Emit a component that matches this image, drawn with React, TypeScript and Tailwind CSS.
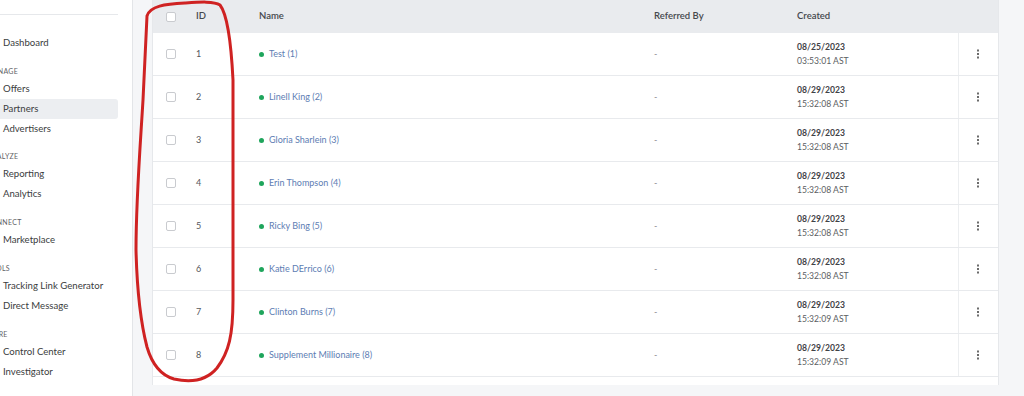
import React from 'react';

type Row = { id: number; name: string; date: string; time: string };

const rows: Row[] = [
  { id: 1, name: 'Test (1)', date: '08/25/2023', time: '03:53:01 AST' },
  { id: 2, name: 'Linell King (2)', date: '08/29/2023', time: '15:32:08 AST' },
  { id: 3, name: 'Gloria Sharlein (3)', date: '08/29/2023', time: '15:32:08 AST' },
  { id: 4, name: 'Erin Thompson (4)', date: '08/29/2023', time: '15:32:08 AST' },
  { id: 5, name: 'Ricky Bing (5)', date: '08/29/2023', time: '15:32:08 AST' },
  { id: 6, name: 'Katie DErrico (6)', date: '08/29/2023', time: '15:32:08 AST' },
  { id: 7, name: 'Clinton Burns (7)', date: '08/29/2023', time: '15:32:09 AST' },
  { id: 8, name: 'Supplement Millionaire (8)', date: '08/29/2023', time: '15:32:09 AST' },
];

const sections = [
  { label: 'Manage', items: ['Offers', 'Partners', 'Advertisers'] },
  { label: 'Analyze', items: ['Reporting', 'Analytics'] },
  { label: 'Connect', items: ['Marketplace'] },
  { label: 'Tools', items: ['Tracking Link Generator', 'Direct Message'] },
  { label: 'More', items: ['Control Center', 'Investigator'] },
];

const cols = 'grid grid-cols-[43px_63px_395px_143px_161px_42px]';

const Checkbox = () => (
  <div className="w-[10px] h-[10px] rounded-[2px] border border-[#c9cbcf] bg-white" />
);

const Dots = () => (
  <svg width="4" height="10" viewBox="0 0 4 10" className="text-[#6b6b6b]">
    <rect x="1" y="0.5" width="2" height="2" fill="currentColor" />
    <rect x="1" y="4" width="2" height="2" fill="currentColor" />
    <rect x="1" y="7.5" width="2" height="2" fill="currentColor" />
  </svg>
);

const NavItem = ({ text, active }: { text: string; active?: boolean }) => (
  <div
    className={`h-[20px] flex items-center pl-[3px] text-[9.6px] text-[#3b3d40] rounded-r-[3px] ${
      active ? 'bg-[#eceef1]' : ''
    }`}
  >
    {text}
  </div>
);

export default function App() {
  return (
    <div
      className="relative w-[1024px] h-[396px] overflow-hidden flex bg-[#f5f6f8]"
      style={{ fontFamily: 'Lato, "Open Sans", sans-serif' }}
    >
      {/* Sidebar */}
      <aside className="w-[133px] shrink-0 bg-white border-r border-[#e3e5e8] overflow-hidden">
        <div className="w-[118px]">
          <div className="h-[15px] border-b border-[#e6e8eb]" />
          <div className="mt-[18px]">
            <NavItem text="Dashboard" />
          </div>
          {sections.map((s, i) => (
            <div key={s.label}>
              <div
                className={`${i === 1 ? 'mt-[12px]' : 'mt-[13px]'} mb-[3px] h-[10px] flex items-center ml-[-14px] text-[7px] uppercase tracking-[0.04em] text-[#5f6266]`}
              >
                {s.label}
              </div>
              {s.items.map((it) => (
                <NavItem key={it} text={it} active={it === 'Partners'} />
              ))}
            </div>
          ))}
        </div>
      </aside>

      {/* Main */}
      <main className="flex-1 pl-[19px] pr-[25px]">
        <div className="w-[847px] h-[385px] bg-white border-x border-[#e6e8eb]">
          <div className={`${cols} h-[33px] items-center bg-[#e9ebee] text-[9.5px] font-semibold text-[#45484c]`}>
            <div className="pl-[13px]">
              <Checkbox />
            </div>
            <div className="pl-[-1px]">ID</div>
            <div>Name</div>
            <div>Referred By</div>
            <div>Created</div>
            <div />
          </div>
          {rows.map((r) => (
            <div key={r.id} className={`${cols} h-[43px] items-center border-b border-[#e8eaed] text-[9px]`}>
              <div className="pl-[13px]">
                <Checkbox />
              </div>
              <div className="text-[#55585c]">{r.id}</div>
              <div className="flex items-center gap-[5px]">
                <span className="w-[5px] h-[5px] rounded-full bg-[#1fa55c]" />
                <span className="text-[#5d7db3]">{r.name}</span>
              </div>
              <div className="text-[#8a8d91]">-</div>
              <div className="leading-[14px] text-[8.6px]">
                <div className="font-bold text-[#3f4246]">{r.date}</div>
                <div className="text-[#5b5e62]">{r.time}</div>
              </div>
              <div className="h-full flex items-center justify-center pr-[3px] border-l border-[#eceef0]">
                <Dots />
              </div>
            </div>
          ))}
        </div>
      </main>

      {/* Hand-drawn annotation */}
      <svg
        className="absolute inset-0 pointer-events-none"
        width="1024"
        height="396"
        viewBox="0 0 1024 396"
      >
        <path
          d="M147,16 C150,6 165,4 185,3 C200,2 214,1 220,5 C227,14 231,40 233,80 L233,300 C233,335 229,352 217,368 C207,380 192,383 174,379 C160,375 152,364 147,347 C140,320 137,290 136,250 C136,200 140,150 143,100 C145,60 146,35 147,16"
          fill="none"
          stroke="#cf2222"
          strokeWidth="3"
          strokeLinecap="round"
          strokeLinejoin="round"
        />
      </svg>
    </div>
  );
}
